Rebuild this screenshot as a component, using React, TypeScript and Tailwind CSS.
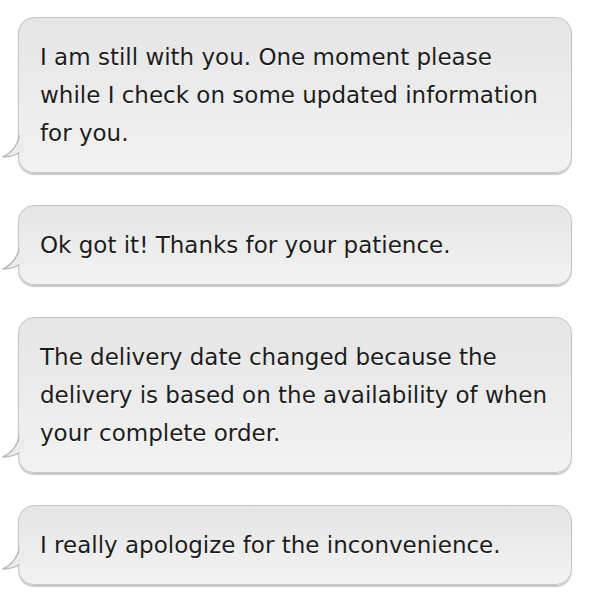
const messages = [
    "I am still with you. One moment please while I check on some updated information for you.",
    "Ok got it! Thanks for your patience.",
    "The delivery date changed because the delivery is based on the availability of when your complete order.",
    "I really apologize for the inconvenience.",
];

function Tail() {
    return (
        <svg
            className="absolute left-[-18px] bottom-[10px]"
            width="24"
            height="28"
            viewBox="0 0 24 28"
        >
            <path d="M20 0 Q17 16 2 23 Q12 23 20 17 Z" fill="#ececec" />
            <path d="M18.5 1 Q16 16 2 23 Q12 23 19.5 18" fill="none" stroke="#b8b8b8" strokeWidth="1.5" strokeLinejoin="round" />
            <path d="M18.5 0 L23 0 L23 19 L18.5 19 Z" fill="#ececec" />
        </svg>
    );
}

function Bubble({ text }: { text: string }) {
    return (
        <div className="relative rounded-[16px] border-[1.5px] border-[#c4c4c4] bg-gradient-to-b from-[#e5e5e5] to-[#f2f2f2] px-[21px] py-[20px] shadow-[0_2px_1px_rgba(0,0,0,0.22)]">
            <Tail />
            <p className="relative text-[23px] leading-[38px] text-[#1c1c1c] [text-shadow:0_1px_0_#fff]">{text}</p>
        </div>
    );
}

export default function App() {
    return (
        <div className="min-h-[607px] w-[598px] bg-white pl-[18px] pr-[26px] pt-[17px] font-['DejaVu_Sans',sans-serif]">
            <div className="flex flex-col gap-[32px]">
                {messages.map((m) => (
                    <Bubble key={m} text={m} />
                ))}
            </div>
        </div>
    );
}
